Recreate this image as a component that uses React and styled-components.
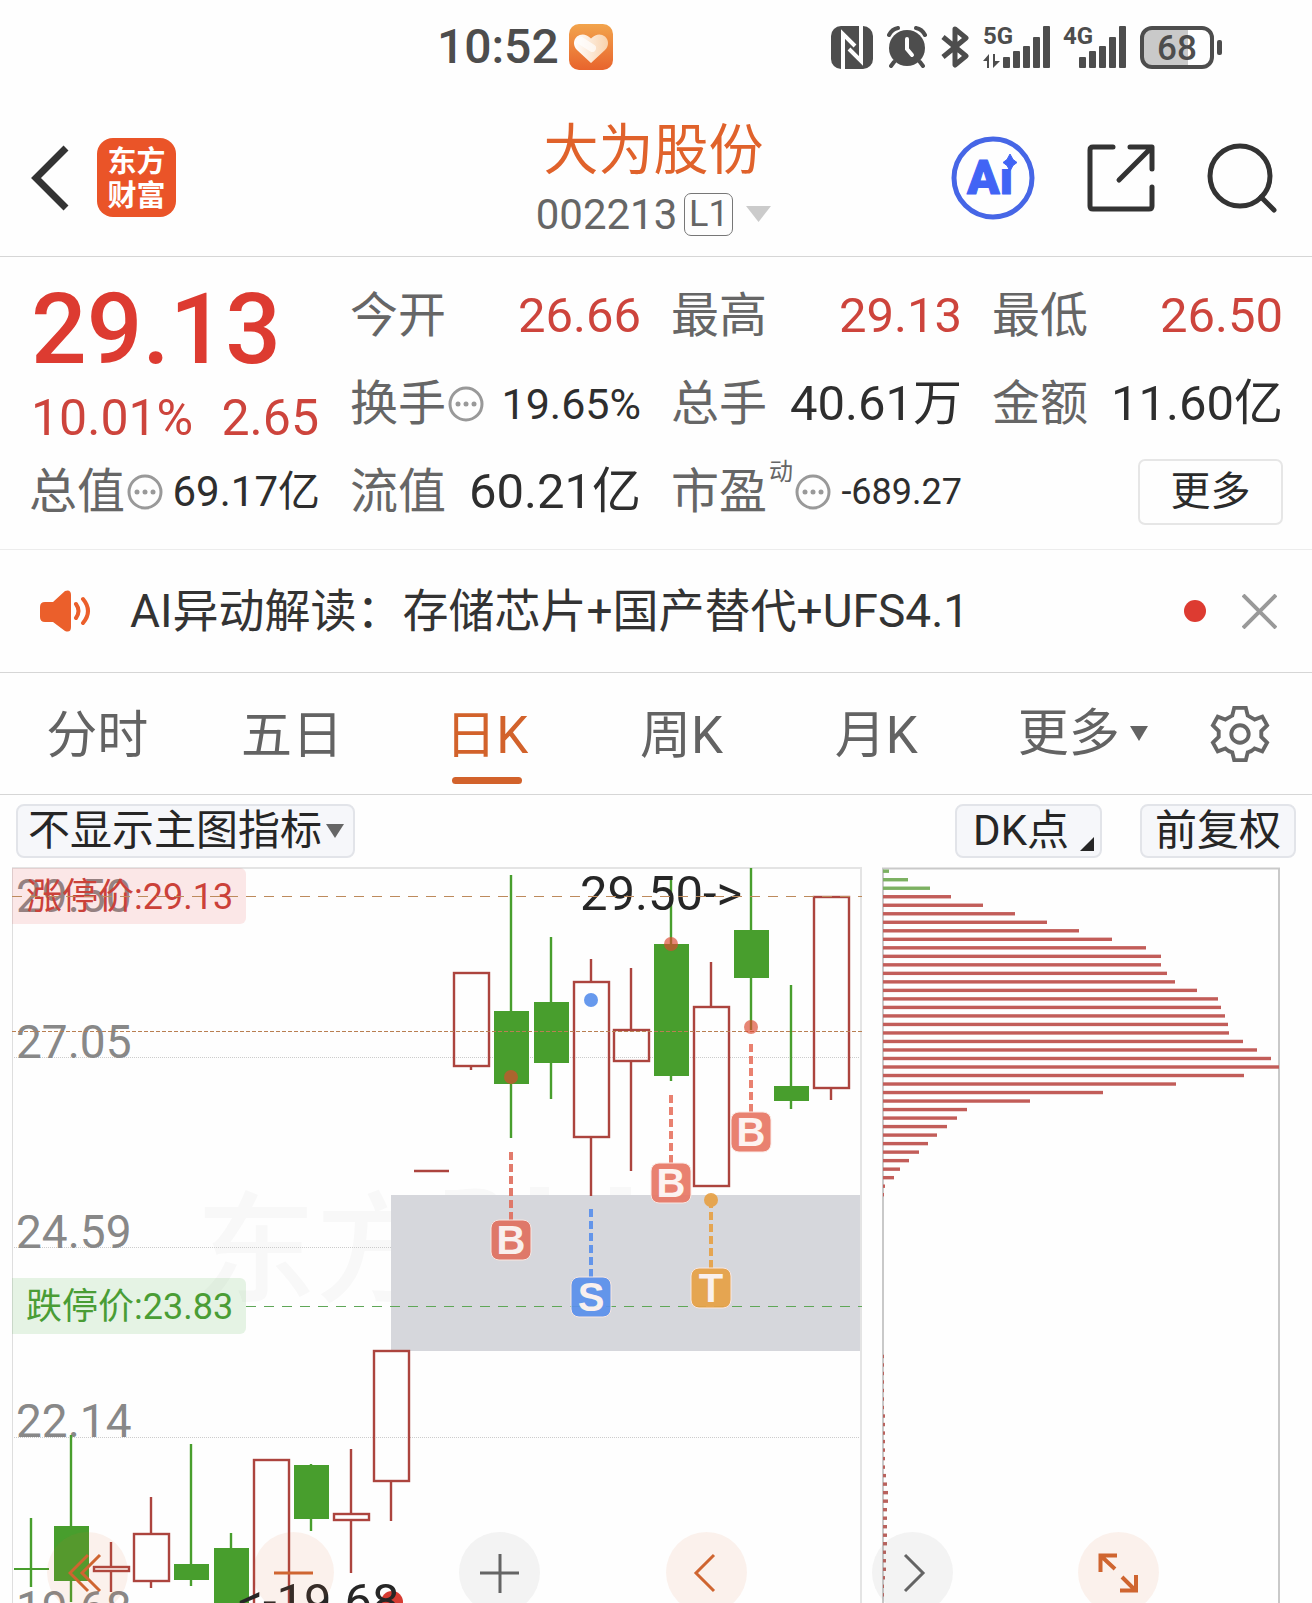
import React, { useState } from "react";
import styled, { createGlobalStyle } from "styled-components";

const GlobalStyle = createGlobalStyle`
    * {
        box-sizing: border-box;
    }
    body {
        margin: 0;
        background-color: #fefefe;
        font-family: Roboto, "Noto Sans CJK SC", sans-serif;
        color: #2b2b2b;
    }
    button {
        padding: 0;
        border: none;
        background: none;
        font: inherit;
        color: inherit;
        cursor: pointer;
    }
    svg {
        display: block;
    }
`

const Page = styled.div`
    width: 100%;
    overflow: hidden;
`

/* ---------- status bar ---------- */

const StatusBar = styled.div`
    display: flex;
    align-items: center;
    justify-content: space-between;
    height: 96px;
    padding: 0 90px 2px 33.3%;
    color: #4d4d4d;
`
const StatusGroup = styled.div`
    display: flex;
    align-items: center;
    gap: ${(props) => props.$gap || 14}px;
`
const Clock = styled.span`
    font-size: 48px;
    font-weight: 500;
    line-height: 48px;
`

/* ---------- header ---------- */

const Header = styled.header`
    display: grid;
    grid-template-columns: 1fr auto 1fr;
    align-items: center;
    height: 161px;
    padding: 3px 35px 0 30px;
    border-bottom: 1px solid #d6d6d6;
`
const HeaderSide = styled.div`
    display: flex;
    align-items: center;
    justify-content: ${(props) => (props.$end ? "flex-end" : "flex-start")};
    gap: ${(props) => (props.$end ? 52 : 28)}px;
`
const AppLogo = styled.a`
    display: flex;
    align-items: center;
    justify-content: center;
    width: 79px;
    height: 79px;
    padding-bottom: 3px;
    border-radius: 16px;
    background-color: #ea5428;
    color: #ffffff;
    font-family: "Noto Sans CJK SC", sans-serif;
    font-size: 29px;
    font-weight: 700;
    line-height: 34px;
    text-align: center;
    text-decoration: none;
`
const TitleBox = styled.div`
    display: flex;
    flex-direction: column;
    align-items: center;
    gap: 13px;
`
const StockName = styled.h1`
    margin: 0;
    font-size: 55px;
    font-weight: 400;
    line-height: 60px;
    color: #e0622b;
`
const StockCode = styled.button`
    display: flex;
    align-items: center;
    gap: 7px;
    font-size: 42px;
    line-height: 43px;
    color: #666666;

    svg {
        margin-left: 6px;
    }
`
const LevelTag = styled.span`
    width: 49px;
    height: 43px;
    border: 1px solid #777777;
    border-radius: 7px;
    font-size: 36px;
    line-height: 41px;
    text-align: center;
`

/* ---------- quote ---------- */

const Quote = styled.section`
    display: grid;
    grid-template-columns: repeat(4, 1fr);
    grid-auto-rows: 88px;
    column-gap: 30px;
    padding: 15px 29px 13px;
    border-bottom: 1px solid #ececec;
`
const PriceBox = styled.div`
    grid-row: span 2;
    display: flex;
    flex-direction: column;
    padding: 6px 1px 0 2px;
    color: #dd3b31;
`
const Price = styled.strong`
    font-size: 98px;
    font-weight: 500;
    line-height: 104px;
`
const Change = styled.div`
    display: flex;
    justify-content: space-between;
    font-size: 50px;
    line-height: 72px;
    color: #cd443c;
`
const Cell = styled.div`
    display: flex;
    align-items: center;
    justify-content: space-between;
    white-space: nowrap;
`
const CellLabel = styled.span`
    display: flex;
    align-items: center;
    gap: 2px;
    font-size: 48px;
    line-height: 60px;
    color: #666666;
`
const Sup = styled.sup`
    align-self: flex-start;
    font-size: 24px;
    line-height: 20px;
`
const CellValue = styled.span`
    font-size: ${(props) => props.$size || 49}px;
    line-height: 60px;
    color: ${(props) => (props.$up ? "#cd443c" : "#2e2e2e")};
`
const MoreButton = styled.button`
    width: 145px;
    height: 66px;
    margin-left: auto;
    border: 2px solid #e6e6e6;
    border-radius: 7px;
    font-size: 40px;
    line-height: 60px;
`

/* ---------- news ---------- */

const News = styled.section`
    display: flex;
    align-items: center;
    height: 123px;
    padding: 0 35px 0 40px;
    border-bottom: 1px solid #d6d6d6;
`
const NewsLink = styled.a`
    flex: 1;
    margin-left: 39px;
    font-size: 46px;
    line-height: 60px;
    color: #333333;
    text-decoration: none;
`
const Dot = styled.span`
    width: 22px;
    height: 22px;
    margin-right: 36px;
    border-radius: 50%;
    background-color: #dd3b31;
`

/* ---------- tabs ---------- */

const Tabs = styled.nav`
    display: grid;
    grid-template-columns: repeat(5, 195fr) 219fr 96fr;
    height: 122px;
    padding-right: 24px;
    border-bottom: 1px solid #d6d6d6;
`
const Tab = styled.button`
    display: flex;
    flex-direction: column;
    align-items: center;
    padding-top: 33px;
    font-size: 51px;
    line-height: 60px;
    color: ${(props) => (props.$active ? "#d2622b" : "#636363")};

    &::after {
        content: "";
        width: 70px;
        height: 7px;
        margin-top: 11px;
        border-radius: 4px;
        background-color: ${(props) => (props.$active ? "#d2622b" : "transparent")};
    }
`
const MoreTab = styled.button`
    display: flex;
    align-items: center;
    justify-content: center;
    gap: 10px;
    font-size: 51px;
    line-height: 60px;
    color: #636363;
`
const GearButton = styled.button`
    display: flex;
    align-items: center;
    justify-content: center;
`

/* ---------- chart tools ---------- */

const Tools = styled.div`
    display: flex;
    align-items: center;
    height: 72px;
    padding: 0 16px;
`
const SelectBox = styled.label`
    position: relative;
    margin-right: auto;

    svg {
        position: absolute;
        right: 11px;
        top: 20px;
        pointer-events: none;
    }
`
const Select = styled.select`
    appearance: none;
    height: 54px;
    padding: 0 30px 0 10px;
    border: 2px solid #e2e4e9;
    border-radius: 8px;
    background-color: #f6f7fa;
    font: inherit;
    font-size: 42px;
    line-height: 50px;
    color: #262626;
`
const ToolButton = styled.button`
    display: flex;
    align-items: flex-end;
    gap: 11px;
    height: 54px;
    margin-left: 38px;
    padding: 0 ${(props) => (props.$corner ? 6 : 13)}px 0 ${(props) => (props.$corner ? 16 : 13)}px;
    border: 2px solid #e2e4e9;
    border-radius: 8px;
    background-color: #f6f7fa;
    font-size: 42px;
    line-height: 50px;
    color: #262626;

    svg {
        margin-bottom: 5px;
    }
`

/* ---------- charts ---------- */

const Charts = styled.section`
    position: relative;
    display: grid;
    grid-template-columns: 850fr 399fr;
    column-gap: 20px;
    padding: 0 31px 0 12px;
    overflow: hidden;
`
const ChartSvg = styled.svg`
    width: 100%;
    height: auto;
`
const FloatBar = styled.div`
    position: absolute;
    left: 47px;
    right: 153px;
    bottom: -10px;
    display: flex;
    justify-content: space-between;
`
const RoundButton = styled.button`
    display: flex;
    align-items: center;
    justify-content: center;
    width: 81px;
    height: 81px;
    border-radius: 50%;
    background-color: ${(props) => (props.$gray ? "rgba(110, 110, 110, 0.08)" : "rgba(222, 110, 50, 0.09)")};
    color: ${(props) => (props.$gray ? "#646464" : "#cf6530")};
`

const GREEN = "#489e2d"
const RED = "#ac443e"

// x, up, body top, body bottom, high, low
const candles = [
    [31, false, 1568, 1570, 1518, 1587],
    [71, false, 1526, 1581, 1435, 1602],
    [111, true, 1567, 1571, 1542, 1592],
    [151, true, 1534, 1581, 1497, 1588],
    [191, false, 1564, 1580, 1444, 1586],
    [231, false, 1548, 1620, 1533, 1620],
    [271, true, 1460, 1620, 1460, 1620],
    [311, false, 1465, 1519, 1464, 1531],
    [351, true, 1514, 1520, 1449, 1573],
    [391, true, 1351, 1481, 1351, 1521],
    [431, true, 1171, 1171, 1171, 1171],
    [471, true, 973, 1066, 973, 1070],
    [511, false, 1011, 1084, 875, 1138],
    [551, false, 1002, 1063, 937, 1099],
    [591, true, 982, 1137, 959, 1196],
    [631, true, 1030, 1061, 968, 1171],
    [671, false, 944, 1076, 877, 1081],
    [711, true, 1007, 1186, 962, 1186],
    [751, false, 930, 978, 868, 1030],
    [791, false, 1086, 1101, 985, 1109],
    [831, true, 897, 1088, 897, 1100],
]

const markers = [
    { x: 511, dot: 1077, from: 1152, badge: 1240, text: "B", color: "#e07060" },
    { x: 591, dot: 1000, from: 1209, badge: 1297, text: "S", color: "#5a90ec" },
    { x: 671, dot: 944, from: 1095, badge: 1183, text: "B", color: "#e87765" },
    { x: 711, dot: 1200, from: 1200, badge: 1288, text: "T", color: "#e7a146" },
    { x: 751, dot: 1027, from: 1044, badge: 1132, text: "B", color: "#e87765" },
]

const axis = [
    ["29.50", 912],
    ["27.05", 1058],
    ["24.59", 1248],
    ["22.14", 1437],
    ["19.68", 1624],
]

const chips = [
    6, 25, 47, 68, 100, 132, 164, 196, 229, 263, 278, 278, 284, 292, 314, 335, 338, 342, 345, 346,
    360, 374, 388, 396, 361, 293, 220, 147, 84, 74, 64, 54, 45, 36, 26, 17, 11, 2, 1,
]
const lowChips = [1, 1, 1, 1, 1, 1, 1, 2, 2, 2, 2, 2, 2, 2, 3, 4, 5, 5, 4, 4, 4, 4, 4, 3, 3, 3, 2, 1, 1]
const CHIP_STEP = 8.513

const Candle = ({ data }) => {
    const [x, up, top, bottom, high, low] = data
    if (!up) {
        return (
            <g fill={GREEN}>
                <path d={`M${x} ${high}V${low}`} stroke={GREEN} strokeWidth="2.4" />
                <rect x={x - 17} y={top} width="35" height={bottom - top} />
            </g>
        )
    }
    return (
        <g fill="none" stroke={RED} strokeWidth="2.4">
            {high < top && <path d={`M${x} ${high}V${top}`} />}
            {low > bottom && <path d={`M${x} ${bottom}V${low}`} />}
            {top === bottom ? (
                <path d={`M${x - 17} ${top}h35`} />
            ) : (
                <rect x={x - 17} y={top} width="35" height={bottom - top} />
            )}
        </g>
    )
}

const Marker = ({ x, dot, from, badge, text, color }) => (
    <g opacity="0.92">
        <path d={`M${x} ${from}V${badge - 20}`} stroke={color} strokeWidth="4" strokeDasharray="8 4" />
        <rect x={x - 20} y={badge - 20} width="40" height="40" rx="8" fill={color} stroke="#fbe9e4" strokeWidth="1" />
        <text x={x} y={badge + 14} textAnchor="middle" fontFamily="Liberation Sans, sans-serif" fontWeight="700" fontSize="40" fill="#fdf3f0">
            {text}
        </text>
        <circle cx={x} cy={dot} r="7" fill={text === "B" ? "#dc4a30" : color} opacity={text === "B" ? 0.72 : 1} />
    </g>
)

const LimitTag = ({ y, text, color, fill }) => (
    <g>
        <path d={`M12 ${y}h228a6 6 0 0 1 6 6v44a6 6 0 0 1 -6 6H12z`} fill={fill} />
        <text x="26" y={y + 41} fontSize="36" fill={color}>{text}</text>
    </g>
)

const KLine = () => (
    <ChartSvg viewBox="12 867 850 736" role="img" aria-label="日K">
        <g fill="#f8f8f8">
            <text x="196" y="1293" fontSize="120" fontWeight="500" fontFamily="Noto Sans CJK SC, sans-serif">东方</text>
            <path d="M445 1190h12q40-6 42 12h-54zM530 1187h19v12h-19zM610 1187h21v12h-21z" />
        </g>
        <rect x="391" y="1195" width="470" height="156" fill="#d6d7dc" />
        <path d="M12 1057.5H861M12 1247.5H391M12 1437.5H861" stroke="#cccccc" strokeDasharray="1 1" />
        <path d="M12 868H862" stroke="#e4e4e4" strokeWidth="2" />
        <path d="M12.5 868V1603" stroke="#dedede" />
        <path d="M861 868V1603" stroke="#e4e4e4" strokeWidth="2" />
        {axis.map(([text, y]) => (
            <text key={text} x="16" y={y} fontSize="46" fill="#888888">{text}</text>
        ))}
        <LimitTag y={868} text="涨停价:29.13" color="#cb4139" fill="rgba(235, 90, 90, 0.14)" />
        <LimitTag y={1278} text="跌停价:23.83" color="#4a9d35" fill="rgba(80, 175, 70, 0.14)" />
        {candles.map((item) => (
            <Candle key={item[0]} data={item} />
        ))}
        <text x="580" y="910" fontSize="49" fill="#262626">29.50-&gt;</text>
        <path d="M12 896.5H862" stroke="#bd8a5c" strokeDasharray="10 8" />
        <path d="M12 1031.5H862" stroke="#b97f52" strokeDasharray="4 2" />
        <path d="M246 1306.5H862" stroke="#5fa757" strokeDasharray="10 8" />
        {markers.map((item) => (
            <Marker key={item.x} {...item} />
        ))}
        <circle cx="392" cy="1602" r="11" fill="#d63b32" />
        <text x="238" y="1618" fontSize="49" fill="#262626">&lt;-19.68</text>
    </ChartSvg>
)

const ChipChart = () => (
    <ChartSvg viewBox="882 867 399 736" role="img" aria-label="筹码分布">
        <path d="M883 1603V868.5H1279V1603" fill="none" stroke="#c9c9c9" strokeWidth="2" />
        {chips.map((width, i) => (
            <rect key={i} x="883" y={869.5 + i * CHIP_STEP} width={width} height="3.4" fill={i < 3 ? "#7cb162" : "#c25d59"} />
        ))}
        {lowChips.map((width, i) => (
            <rect key={i} x="883" y={869.5 + (i + 57) * CHIP_STEP} width={width} height="3.4" fill="#b9625d" />
        ))}
    </ChartSvg>
)

/* ---------- icons ---------- */

const Triangle = ({ width, height, color }) => (
    <svg width={width} height={height} viewBox="0 0 20 16" preserveAspectRatio="none" fill={color}>
        <path d="M0 0h20L10 16z" />
    </svg>
)

const HeartIcon = () => (
    <svg width="44" height="46" viewBox="0 0 44 46">
        <defs>
            <linearGradient id="heartBg" x1="0" y1="0" x2="0" y2="1">
                <stop offset="0" stopColor="#f2a44c" />
                <stop offset="1" stopColor="#e8642d" />
            </linearGradient>
            <linearGradient id="heartFill" x1="0" y1="0" x2="1" y2="0">
                <stop offset="0" stopColor="#fff" />
                <stop offset="1" stopColor="#f9d2ac" />
            </linearGradient>
        </defs>
        <rect width="44" height="46" rx="10" fill="url(#heartBg)" />
        <path d="M22 39 8 26C4 22 4 16 8 12.500c4-3 9-3 14 2 5-5 10-5 14-2 4 3.500 4 9.500 0 13.500z" fill="url(#heartFill)" />
        <path d="M12 17 23 24" stroke="#fff" strokeWidth="8" strokeLinecap="round" opacity="0.7" />
    </svg>
)

const NfcIcon = () => (
    <svg width="42" height="43" viewBox="0 0 42 43" fill="none">
        <rect width="42" height="43" rx="10" fill="#4d4d4d" />
        <path d="M12 43V8L24 20M30 0V35L18 23" stroke="#fefefe" strokeWidth="4" />
    </svg>
)

const AlarmIcon = () => (
    <svg width="40" height="42" viewBox="0 0 40 42" fill="none" stroke="#4d4d4d" strokeLinecap="round">
        <circle cx="20" cy="22" r="18" fill="#4d4d4d" stroke="none" />
        <path d="M2 9Q5 3 11 2M29 2q6 1 9 7" strokeWidth="4" />
        <path d="M7 36l-3 4M33 36l3 4" strokeWidth="4" />
        <path d="M20 13v10l5 6" stroke="#fefefe" strokeWidth="4" />
    </svg>
)

const BluetoothIcon = () => (
    <svg width="28" height="42" viewBox="0 0 28 42" fill="none" stroke="#4d4d4d" strokeWidth="5" strokeLinejoin="round">
        <path d="M2 11 25 30 14 39V3L25 12 2 31" />
    </svg>
)

const SignalSvg = styled.svg`
    overflow: visible;
`

const SignalIcon = ({ label, arrows }) => (
    <SignalSvg width={arrows ? 67 : 62} height="42" viewBox={arrows ? "0 0 67 42" : "5 0 62 42"} fill="#4d4d4d">
        <text x={arrows ? 0 : 4} y="18" fontSize="24" fontWeight="700">{label}</text>
        <rect x="20" y="31" width="7" height="11" rx="1" />
        <rect x="30" y="25" width="7" height="17" rx="1" />
        <rect x="40" y="20" width="7" height="22" rx="1" />
        <rect x="50" y="11" width="7" height="31" rx="1" />
        <rect x="60" y="0" width="7" height="42" rx="1" />
        {arrows && <path d="M0 35 6 28v14H4v-7zM10 28h2v7h5l-7 7z" />}
    </SignalSvg>
)

const BatteryIcon = () => (
    <svg width="82" height="43" viewBox="0 0 82 43">
        <rect x="2" y="2" width="70" height="39" rx="10" fill="#fefefe" />
        <path d="M12 2h36v39H12a10 10 0 0 1-10-10V12A10 10 0 0 1 12 2z" fill="#c9c9c9" />
        <rect x="2" y="2" width="70" height="39" rx="10" fill="none" stroke="#4d4d4d" strokeWidth="4" />
        <rect x="77" y="14" width="5" height="15" rx="2" fill="#4d4d4d" />
        <text x="37" y="34" textAnchor="middle" fontSize="35" fontWeight="500" fill="#4d4d4d">68</text>
    </svg>
)

const BackIcon = () => (
    <svg width="39" height="66" viewBox="0 0 39 66" fill="none" stroke="#333333" strokeWidth="7">
        <path d="M36 3 6 33 36 63" />
    </svg>
)

const AiIcon = () => (
    <svg width="84" height="84" viewBox="0 0 84 84">
        <circle cx="42" cy="42" r="39" fill="none" stroke="#4666e6" strokeWidth="5" />
        <text x="16" y="58" fontSize="48" fontWeight="900" fill="#4164f5" stroke="#4164f5" strokeWidth="1" strokeLinejoin="round">Ai</text>
        <path d="M49 18H65V33H49z" fill="#fefefe" />
        <path d="M59 18 62 23.500 66 26.500 62 29.500 59 35 56 29.500 52 26.500 56 23.500z" fill="#4164f5" stroke="#4164f5" strokeWidth="1" />
    </svg>
)

const ShareIcon = () => (
    <svg width="68" height="68" viewBox="0 0 68 68" fill="none" stroke="#333333" strokeWidth="5" strokeLinecap="round" strokeLinejoin="round">
        <path d="M26 3H6Q3 3 3 6V62q0 3 3 3H62q3 0 3-3V43" />
        <path d="M43 3H65V25M64 4 32 36" />
    </svg>
)

const SearchIcon = () => (
    <svg width="70" height="70" viewBox="0 0 70 70" fill="none" stroke="#333333" strokeWidth="5" strokeLinecap="round">
        <circle cx="33" cy="33" r="30" />
        <path d="M54 54 67 67" />
    </svg>
)

const InfoIcon = () => (
    <svg width="36" height="36" viewBox="0 0 36 36" fill="#999999">
        <circle cx="18" cy="18" r="16" fill="none" stroke="#999999" strokeWidth="3" />
        <circle cx="10" cy="18" r="2.500" />
        <circle cx="18" cy="18" r="2.500" />
        <circle cx="26" cy="18" r="2.500" />
    </svg>
)

const SpeakerIcon = () => (
    <svg width="51" height="42" viewBox="0 0 51 42" fill="none" stroke="#eb5f2b" strokeWidth="4" strokeLinecap="round">
        <path d="M5 12h8L25 1q6-2 6 4v32q0 6-6 4L13 32H5q-5 0-5-5V17q0-5 5-5z" fill="#eb5f2b" stroke="none" />
        <path d="M36 14q5 7 0 14M43 9q10 12 0 24" />
    </svg>
)

const CloseIcon = () => (
    <svg width="35" height="35" viewBox="0 0 35 35" stroke="#999999" strokeWidth="4">
        <path d="M1 1 34 34M34 1 1 34" />
    </svg>
)

const GearIcon = () => (
    <svg width="60" height="60" viewBox="0 0 62 62" fill="none" stroke="#666666" strokeWidth="4">
        <path d="M25 4H37L39 12Q43 14 46 16L54 13 59 22 53 28V34L59 40 54 49 46 46Q43 49 39 50L37 58H25L23 50Q19 49 16 46L8 49 3 40 9 34V28L3 22 8 13 16 16Q19 14 23 12z" />
        <circle cx="31" cy="31" r="9" />
    </svg>
)

const FloatIcon = ({ d, width = 3 }) => (
    <svg width="40" height="40" viewBox="0 0 40 40" fill="none" stroke="currentColor" strokeWidth={width}>
        <path d={d} />
    </svg>
)

const floatButtons = [
    { label: "最左", d: "M20 2 2 20 20 38M32 2 14 20 32 38" },
    { label: "缩小", d: "M0 20H39" },
    { label: "放大", d: "M0 20H39M20 1V40", gray: true },
    { label: "左移", d: "M28 2 10 20 28 38" },
    { label: "右移", d: "M13 2 31 20 13 38", gray: true },
    { label: "全屏", d: "M19 2.500H2.500V19M3 3 17 16M22 37.500H38V22M37 37 24 24", width: 4 },
]

const quoteCells = [
    { label: "今开", value: "26.66", up: true },
    { label: "最高", value: "29.13", up: true },
    { label: "最低", value: "26.50", up: true },
    { label: "换手", value: "19.65%", info: true, size: 43 },
    { label: "总手", value: "40.61万" },
    { label: "金额", value: "11.60亿" },
    { label: "总值", value: "69.17亿", info: true, size: 42 },
    { label: "流值", value: "60.21亿" },
    { label: "市盈", sup: "动", value: "-689.27", info: true, size: 36 },
]

const tabs = ["分时", "五日", "日K", "周K", "月K"]

const App = () => {
    const [active, setActive] = useState("日K")

    return (
        <Page>
            <GlobalStyle />
            <StatusBar>
                <StatusGroup $gap={10}>
                    <Clock>10:52</Clock>
                    <HeartIcon />
                </StatusGroup>
                <StatusGroup>
                    <NfcIcon />
                    <AlarmIcon />
                    <BluetoothIcon />
                    <SignalIcon label="5G" arrows />
                    <SignalIcon label="4G" />
                    <BatteryIcon />
                </StatusGroup>
            </StatusBar>

            <Header>
                <HeaderSide>
                    <button aria-label="返回"><BackIcon /></button>
                    <AppLogo href="#">东方<br />财富</AppLogo>
                </HeaderSide>
                <TitleBox>
                    <StockName>大为股份</StockName>
                    <StockCode>
                        002213
                        <LevelTag>L1</LevelTag>
                        <Triangle width={25} height={16} color="#cbcbcb" />
                    </StockCode>
                </TitleBox>
                <HeaderSide $end>
                    <button aria-label="AI"><AiIcon /></button>
                    <button aria-label="分享"><ShareIcon /></button>
                    <button aria-label="搜索"><SearchIcon /></button>
                </HeaderSide>
            </Header>

            <Quote>
                <PriceBox>
                    <Price>29.13</Price>
                    <Change>
                        <span>10.01%</span>
                        <span>2.65</span>
                    </Change>
                </PriceBox>
                {quoteCells.map((cell) => (
                    <Cell key={cell.label}>
                        <CellLabel>
                            {cell.label}
                            {cell.sup && <Sup>{cell.sup}</Sup>}
                            {cell.info && <InfoIcon />}
                        </CellLabel>
                        <CellValue $up={cell.up} $size={cell.size}>{cell.value}</CellValue>
                    </Cell>
                ))}
                <Cell>
                    <MoreButton>更多</MoreButton>
                </Cell>
            </Quote>

            <News>
                <SpeakerIcon />
                <NewsLink href="#">AI异动解读：存储芯片+国产替代+UFS4.1</NewsLink>
                <Dot />
                <button aria-label="关闭"><CloseIcon /></button>
            </News>

            <Tabs>
                {tabs.map((tab) => (
                    <Tab key={tab} $active={tab === active} onClick={() => setActive(tab)}>{tab}</Tab>
                ))}
                <MoreTab>
                    更多
                    <Triangle width={18} height={15} color="#636363" />
                </MoreTab>
                <GearButton aria-label="设置"><GearIcon /></GearButton>
            </Tabs>

            <Tools>
                <SelectBox>
                    <Select aria-label="主图指标">
                        <option>不显示主图指标</option>
                    </Select>
                    <Triangle width={18} height={14} color="#666666" />
                </SelectBox>
                <ToolButton $corner>
                    DK点
                    <svg width="14" height="14" viewBox="0 0 14 14" fill="#262626"><path d="M14 0v14H0z" /></svg>
                </ToolButton>
                <ToolButton>前复权</ToolButton>
            </Tools>

            <Charts>
                <KLine />
                <ChipChart />
                <FloatBar>
                    {floatButtons.map((item) => (
                        <RoundButton key={item.label} $gray={item.gray} aria-label={item.label}>
                            <FloatIcon d={item.d} width={item.width} />
                        </RoundButton>
                    ))}
                </FloatBar>
            </Charts>
        </Page>
    )
}

export default App
